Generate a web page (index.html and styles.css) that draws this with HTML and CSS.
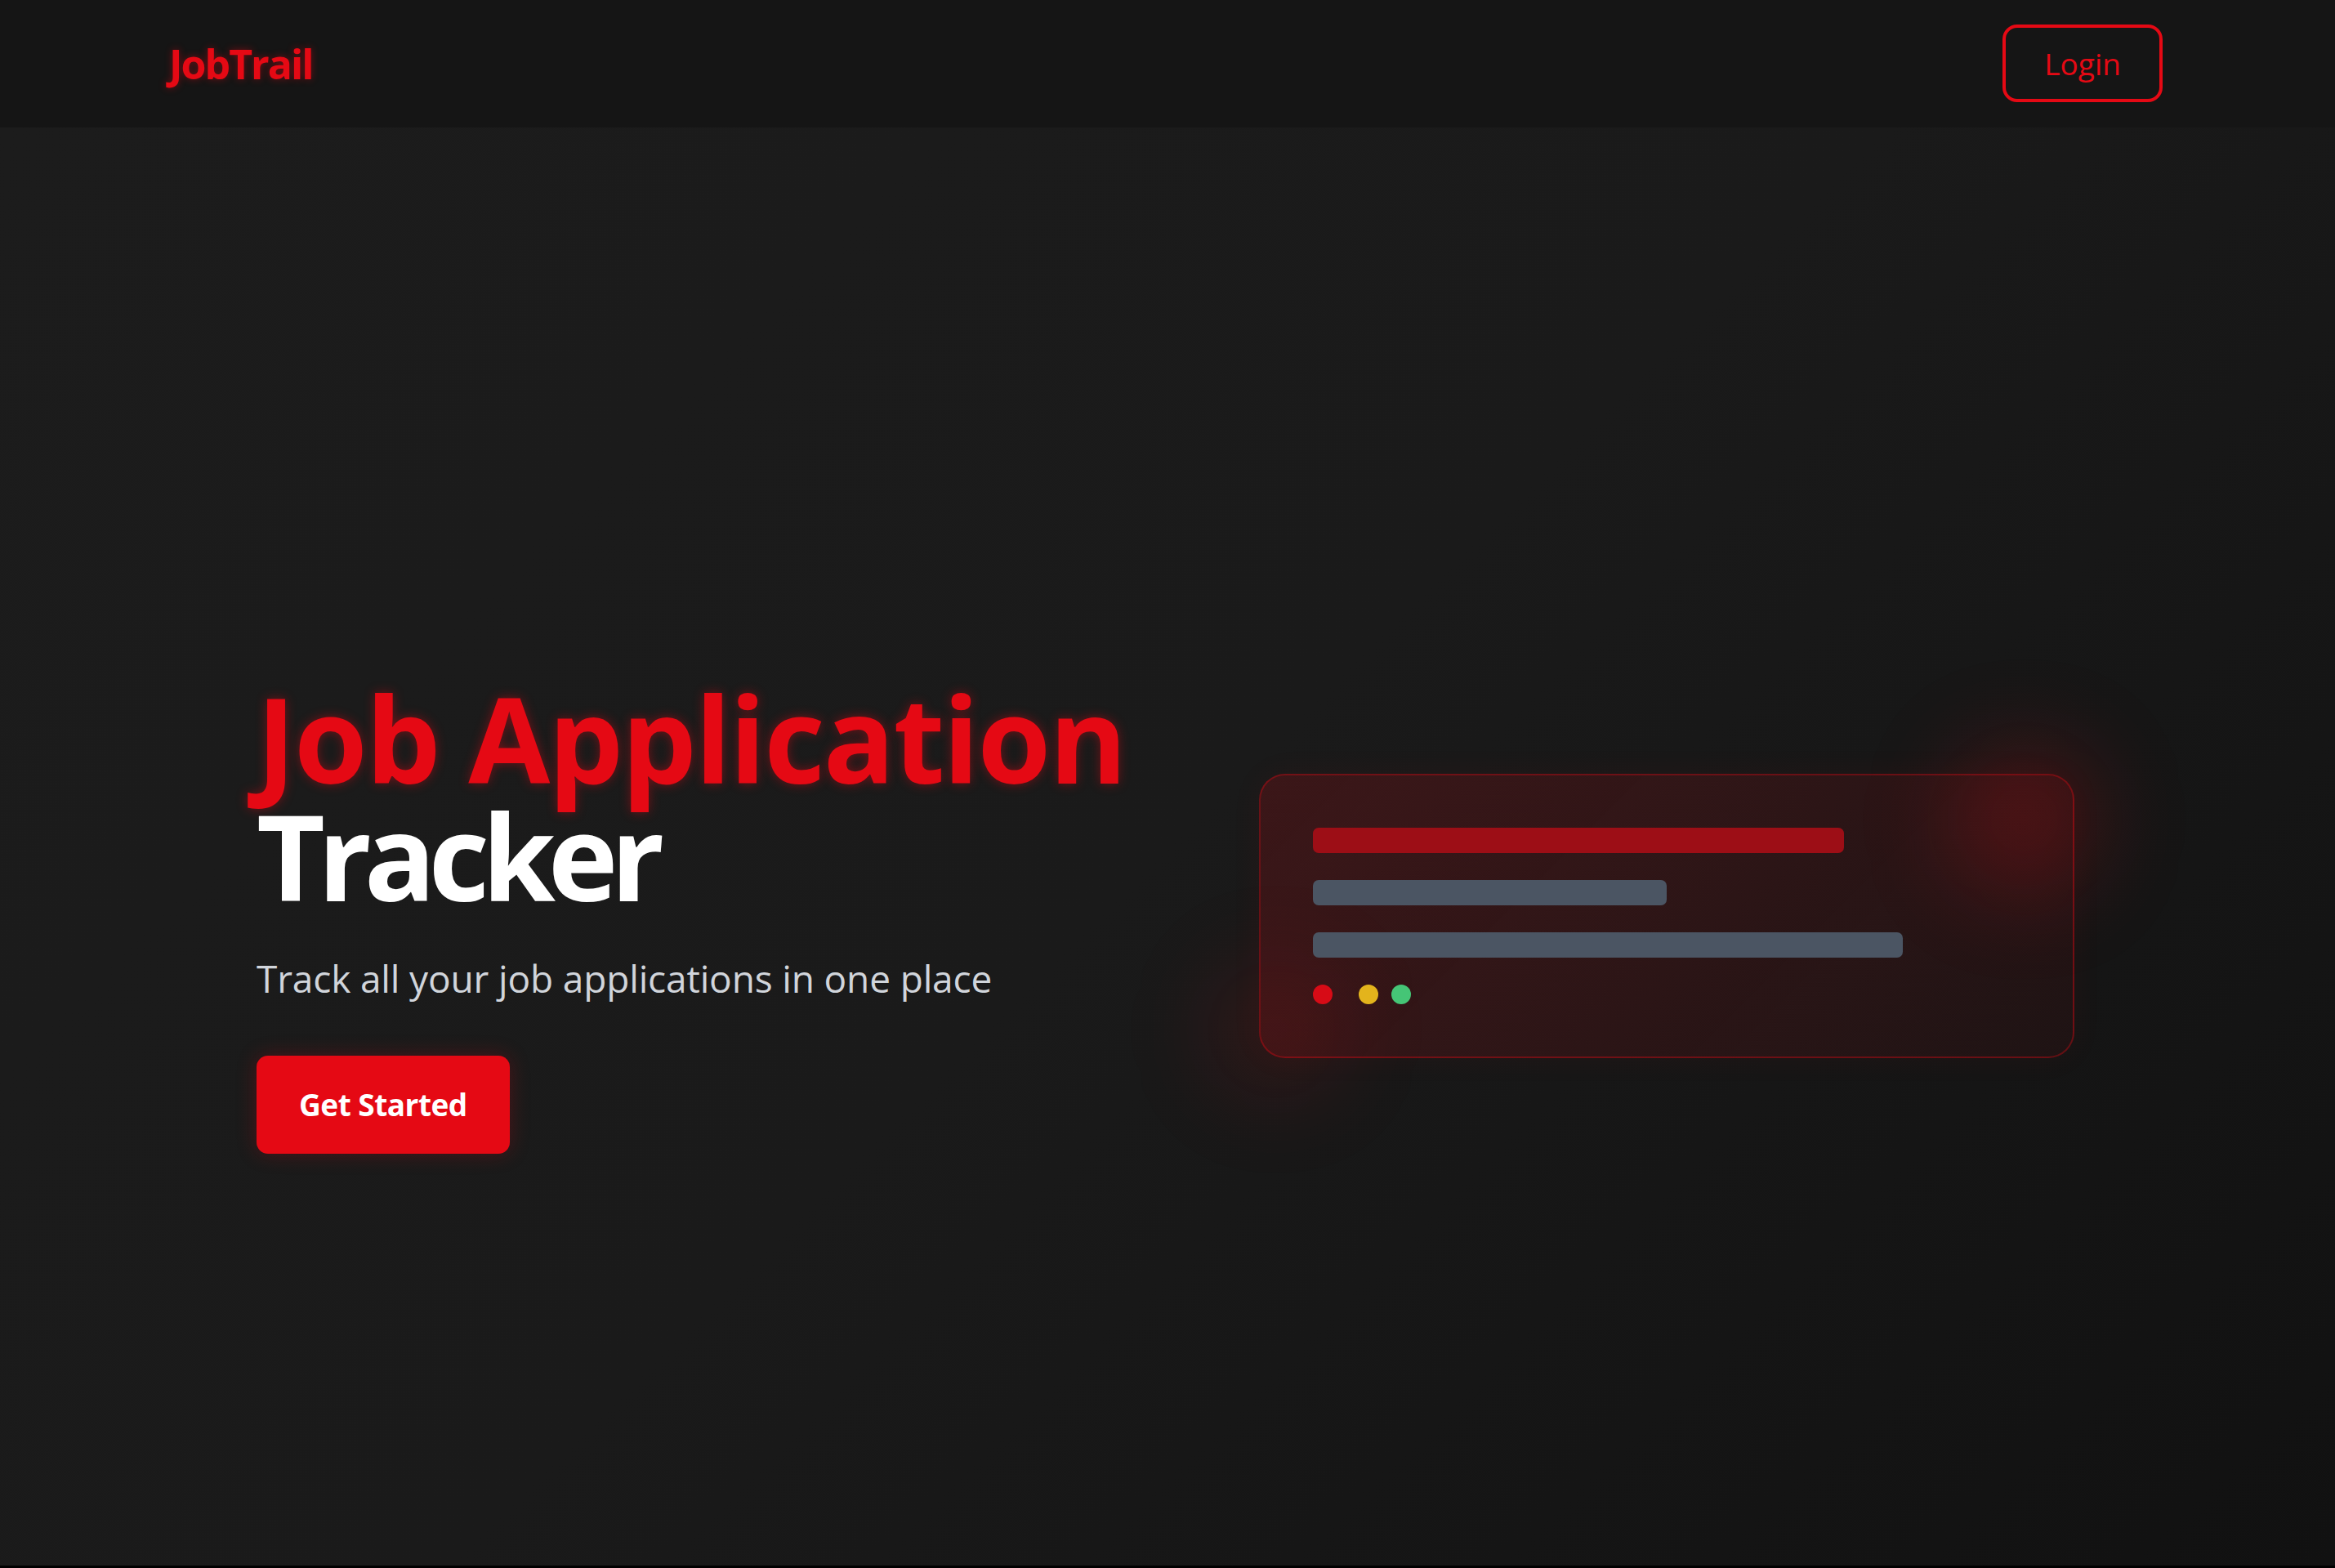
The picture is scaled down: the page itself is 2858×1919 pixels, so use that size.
FILE: index.html
```html
<!DOCTYPE html>
<html lang="en">
<head>
<meta charset="utf-8">
<title>JobTrail</title>
<link rel="stylesheet" href="styles.css">
</head>
<body>
<header class="topbar">
  <div class="logo">JobTrail</div>
  <button class="login-btn">Login</button>
</header>
<main class="hero">
  <section class="hero-text">
    <h1 class="title"><span class="title-red">Job Application</span><span class="title-white">Tracker</span></h1>
    <p class="subtitle">Track all your job applications in one place</p>
    <button class="cta-btn">Get Started</button>
  </section>
  <section class="preview-card">
    <div class="bar bar-red"></div>
    <div class="bar bar-gray bar-half"></div>
    <div class="bar bar-gray bar-long"></div>
    <div class="dots">
      <span class="dot dot-red"></span>
      <span class="dot dot-yellow"></span>
      <span class="dot dot-green"></span>
    </div>
  </section>
</main>
</body>
</html>
```

FILE: styles.css
```css
* { box-sizing: border-box; }
html, body { margin: 0; padding: 0; }
body {
  background: #000;
  font-family: "Open Sans", "Noto Sans", "DejaVu Sans", sans-serif;
  overflow: hidden;
}

.topbar {
  height: 156px;
  background: #151515;
  display: flex;
  align-items: center;
  justify-content: space-between;
  padding: 0 211px 0 207px;
}
.logo {
  color: #e50914;
  font-size: 50px;
  font-weight: 700;
  letter-spacing: -2px;
  text-shadow: 0 0 10px rgba(229, 9, 20, 0.45);
}
.login-btn {
  font-family: inherit;
  background: transparent;
  color: #e50914;
  border: 4px solid #e50914;
  border-radius: 18px;
  font-size: 37px;
  font-weight: 500;
  line-height: 55px;
  padding: 16px 47px;
  margin-top: -2px;
}

.hero {
  height: 1760px;
  background: linear-gradient(135deg, #1c1c1c 0%, #1a1a1a 50%, #111111 100%);
  display: flex;
  align-items: center;
  justify-content: space-between;
  padding: 170px 319px 0 314px;
}
.hero-text {
  display: flex;
  flex-direction: column;
  align-items: flex-start;
}
.title {
  margin: 0;
  font-size: 145px;
  line-height: 144px;
  font-weight: 700;
  letter-spacing: -2px;
  display: flex;
  flex-direction: column;
}
.title-red {
  color: #e50914;
  text-shadow: 0 0 14px rgba(229, 9, 20, 0.45);
}
.title-white {
  color: #ffffff;
  letter-spacing: -9px;
}
.subtitle {
  margin: 44px 0 0;
  font-size: 46px;
  line-height: 69px;
  color: #d1d5db;
  letter-spacing: -0.15px;
}
.cta-btn {
  margin-top: 60px;
  font-family: inherit;
  background: #e50914;
  color: #fff;
  border: none;
  border-radius: 14px;
  font-size: 37px;
  font-weight: 700;
  line-height: 55px;
  letter-spacing: -0.5px;
  padding: 32px 52px 33px;
  box-shadow: 0 0 24px rgba(229, 9, 20, 0.25);
}

.preview-card {
  position: relative;
  isolation: isolate;
  width: 998px;
  border: 2px solid rgba(229, 9, 20, 0.35);
  border-radius: 32px;
  padding: 64px;
  background: linear-gradient(135deg, rgba(229, 9, 20, 0.17) 0%, rgba(229, 9, 20, 0.11) 50%, rgba(229, 9, 20, 0.05) 100%);
  display: flex;
  flex-direction: column;
  gap: 33px;
  box-shadow: 0 0 40px rgba(229, 9, 20, 0.05);
}
.preview-card::before,
.preview-card::after {
  content: "";
  position: absolute;
  border-radius: 50%;
  z-index: -1;
}
.preview-card::before {
  width: 180px;
  height: 180px;
  top: -36px;
  right: -31px;
  background: rgba(229, 9, 20, 0.22);
  filter: blur(55px);
}
.preview-card::after {
  width: 160px;
  height: 160px;
  bottom: -47px;
  left: -61px;
  background: rgba(229, 9, 20, 0.12);
  filter: blur(55px);
}

.bar {
  height: 31px;
  border-radius: 7px;
}
.bar-red { width: 75%; background: #9d0e16; }
.bar-gray { background: #4b5563; }
.bar-half { width: 50%; }
.bar-long { width: 83.4%; }

.dots {
  display: flex;
  gap: 16px;
}
.dot {
  width: 24px;
  height: 24px;
  border-radius: 50%;
}
.dot-red { background: #d70b16; margin-right: 16px; }
.dot-yellow { background: #e3b41c; }
.dot-green { background: #45c576; }
```
